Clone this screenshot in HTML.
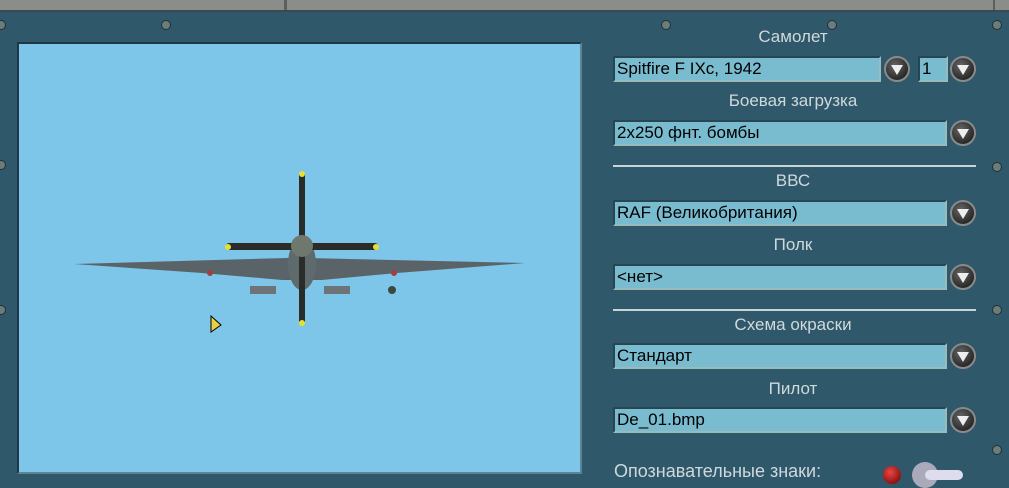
<!DOCTYPE html>
<html><head><meta charset="utf-8"><style>
body{margin:0;width:1009px;height:484px;overflow:hidden;background:#2f596b;font-family:"Liberation Sans",sans-serif;position:relative}
.top{position:absolute;left:0;top:0;width:1009px;height:10px;background:#8a8d88;border-bottom:2px solid #3a4a50}
.sep{position:absolute;top:0;left:284px;width:3px;height:10px;background:#5c605c}
.sep2{position:absolute;top:0;left:993px;width:2px;height:10px;background:#5c605c}
.preview{position:absolute;left:17px;top:42px;width:561px;height:428px;background:#7dc6ea;border:2px solid #1f3845;border-right-color:#5d8494;border-bottom-color:#5d8494}
.lbl{position:absolute;color:#d0d8dc;font-size:17px;text-align:center;width:380px;left:603px}
.f{position:absolute;left:613px;height:26px;background:#79bcd0;border:2px solid #284652;border-right-color:#9bb;border-bottom-color:#9bb;box-sizing:border-box;font-size:17px;color:#000;line-height:22px;padding-left:2px}
.btn{position:absolute;width:26px;height:26px;border-radius:50%;background:radial-gradient(circle at 40% 35%,#666,#2a2a2a 70%);border:2px solid #8a8a8a;box-sizing:border-box}
.btn:after{content:"";position:absolute;left:5px;top:7px;border-left:6px solid transparent;border-right:6px solid transparent;border-top:10px solid #eee}
.hr{position:absolute;left:613px;width:363px;height:2px;background:#c8d4d8}
.scr{position:absolute;width:8px;height:8px;border-radius:50%;background:#6c7c78;border:1px solid #203038}
</style></head><body>
<div class="top"></div><div class="sep"></div><div class="sep2"></div>
<div class="scr" style="left:-4px;top:20px"></div>
<div class="scr" style="left:-4px;top:160px"></div>
<div class="scr" style="left:-4px;top:305px"></div>
<div class="scr" style="left:161px;top:20px"></div>
<div class="scr" style="left:661px;top:20px"></div>
<div class="scr" style="left:827px;top:20px"></div>
<div class="scr" style="left:992px;top:20px"></div>
<div class="scr" style="left:992px;top:162px"></div>
<div class="scr" style="left:992px;top:305px"></div>
<div class="scr" style="left:992px;top:445px"></div>
<div class="preview">
<svg width="561" height="428" viewBox="0 0 561 428">
<g transform="translate(-17,-42)">
<path d="M72,262 L285,256 L305,256 L523,261 L395,271 L320,278 L280,278 L200,271 Z" fill="#5a6468"/>
<rect x="248" y="284" width="26" height="8" fill="#6c7478"/>
<rect x="322" y="284" width="26" height="8" fill="#6c7478"/>
<ellipse cx="300" cy="262" rx="14" ry="26" fill="#5e6a6c"/>
<rect x="297" y="170" width="6" height="152" rx="3" fill="#2a2c2a"/>
<rect x="224" y="241" width="152" height="7" rx="3" fill="#2a2c2a"/>
<circle cx="300" cy="244" r="11" fill="#6e786e"/>
<circle cx="300" cy="172" r="3" fill="#e8e030"/><circle cx="300" cy="321" r="3" fill="#e8e030"/>
<circle cx="226" cy="245" r="3" fill="#e8e030"/><circle cx="374" cy="245" r="3" fill="#e8e030"/>
<circle cx="390" cy="288" r="4" fill="#3a4a40"/>
<circle cx="208" cy="271" r="3" fill="#a04040"/><circle cx="392" cy="271" r="3" fill="#a04040"/>
<path d="M209,314 L209,330 L219,323 Z" fill="#e8d040" stroke="#000"/>
</g></svg></div>
<div class="lbl" style="top:27px">Самолет</div>
<div class="f" style="top:56px;width:268px">Spitfire F IXc, 1942</div>
<div class="btn" style="left:884px;top:56px"></div>
<div class="f" style="left:918px;top:56px;width:30px">1</div>
<div class="btn" style="left:950px;top:56px"></div>
<div class="lbl" style="top:91px">Боевая загрузка</div>
<div class="f" style="top:120px;width:334px">2x250 фнт. бомбы</div>
<div class="btn" style="left:950px;top:120px"></div>
<div class="hr" style="top:165px"></div>
<div class="lbl" style="top:171px">ВВС</div>
<div class="f" style="top:200px;width:334px">RAF (Великобритания)</div>
<div class="btn" style="left:950px;top:200px"></div>
<div class="lbl" style="top:235px">Полк</div>
<div class="f" style="top:264px;width:334px">&lt;нет&gt;</div>
<div class="btn" style="left:950px;top:264px"></div>
<div class="hr" style="top:309px"></div>
<div class="lbl" style="top:315px">Схема окраски</div>
<div class="f" style="top:343px;width:334px">Стандарт</div>
<div class="btn" style="left:950px;top:343px"></div>
<div class="lbl" style="top:379px">Пилот</div>
<div class="f" style="top:407px;width:334px">De_01.bmp</div>
<div class="btn" style="left:950px;top:407px"></div>
<div style="position:absolute;left:614px;top:461px;color:#cfd8dc;font-size:18px">Опознавательные знаки:</div>
<div style="position:absolute;left:883px;top:466px;width:18px;height:18px;border-radius:50%;background:radial-gradient(circle at 40% 35%,#e44,#600)"></div>
<div style="position:absolute;left:912px;top:462px;width:26px;height:26px;border-radius:50%;background:#aab"></div>
<div style="position:absolute;left:925px;top:470px;width:38px;height:10px;border-radius:5px;background:#dde"></div>
</body></html>
